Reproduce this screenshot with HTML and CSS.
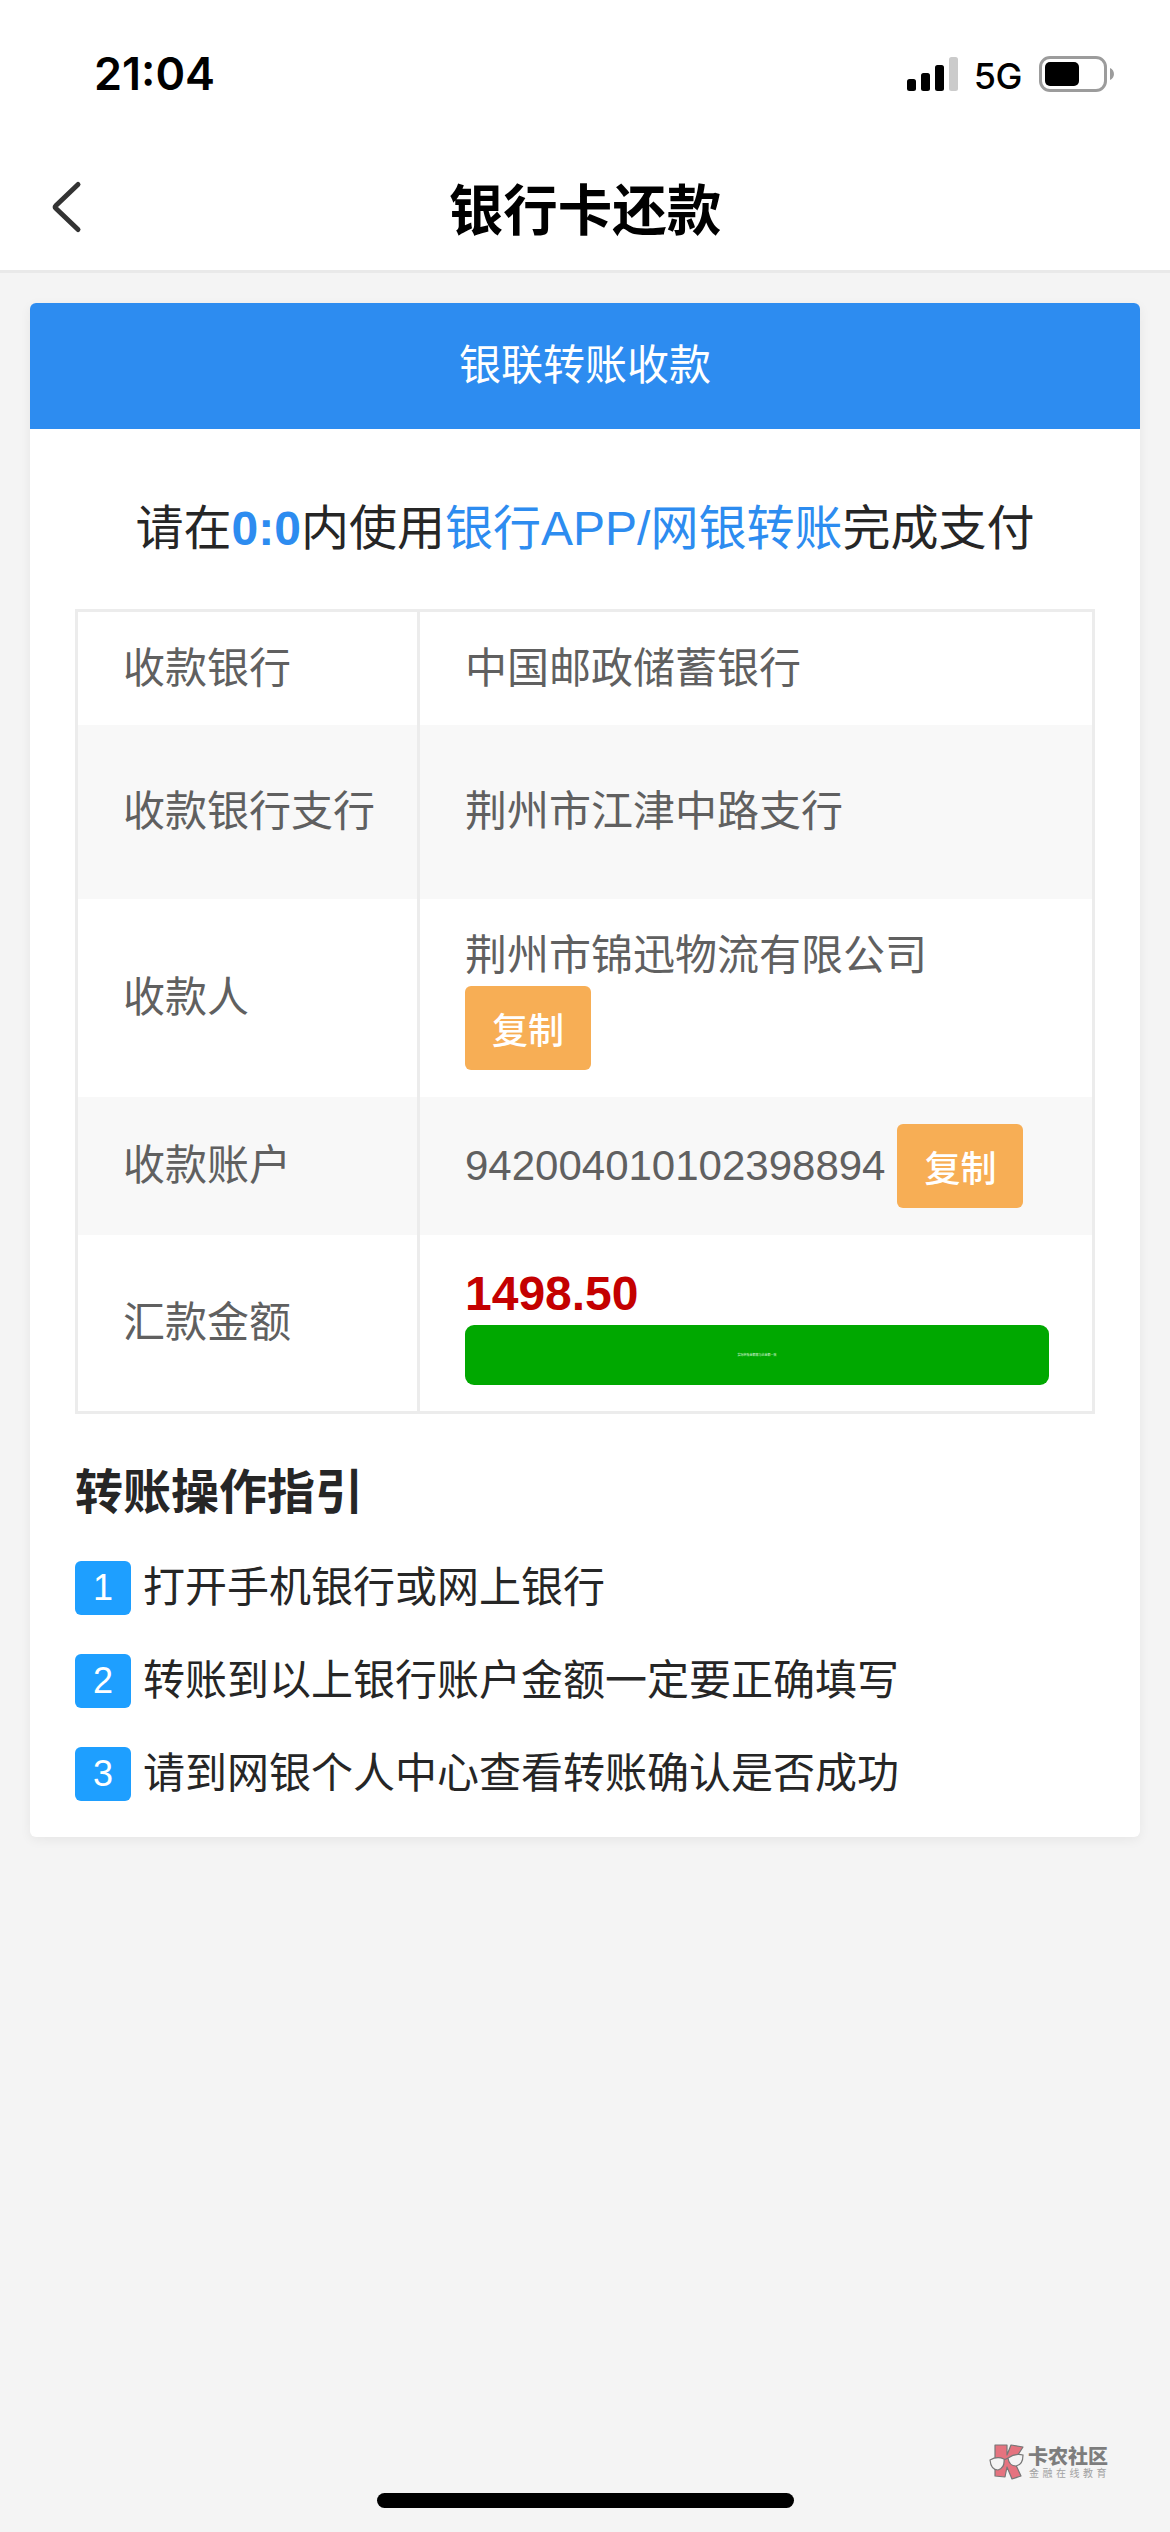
FILE: index.html
```html
<!DOCTYPE html>
<html lang="zh-CN">
<head>
<meta charset="utf-8">
<title>银行卡还款</title>
<link rel="stylesheet" href="styles.css">
</head>
<body>
<header class="top">
  <div class="status">
    <span class="time">21:04</span>
    <div class="status-icons">
      <svg class="signal" width="52" height="34" viewBox="0 0 52 34">
        <rect x="0" y="22" width="9" height="12" rx="2.5"/>
        <rect x="14" y="16" width="9" height="18" rx="2.5"/>
        <rect x="28" y="8" width="9" height="26" rx="2.5"/>
        <rect x="42" y="0" width="9" height="34" rx="2.5" fill="#cbcbcb"/>
      </svg>
      <span class="network">5G</span>
      <svg class="battery" width="76" height="36" viewBox="0 0 76 36">
        <rect x="1.5" y="1.5" width="65" height="33" rx="9.5" fill="none" stroke="#9c9c9c" stroke-width="3"/>
        <rect x="6" y="6" width="34" height="24" rx="5"/>
        <path d="M71 12c5.300 2.400 5.300 9.600 0 12z" fill="#9c9c9c"/>
      </svg>
    </div>
  </div>
  <nav class="nav">
    <svg class="back" width="32" height="54" viewBox="0 0 32 54">
      <path d="M28 4.500 L6 25.500 Q4.500 27 6 28.500 L28 49.500" fill="none" stroke="#333" stroke-width="5" stroke-linecap="round" stroke-linejoin="round"/>
    </svg>
    <h1 class="nav-title">银行卡还款</h1>
  </nav>
</header>

<main class="card">
  <h2 class="card-head">银联转账收款</h2>
  <p class="notice">请在<b class="blue">0:0</b>内使用<span class="blue">银行APP/网银转账</span>完成支付</p>
  <table class="info">
    <colgroup><col class="col-label"><col></colgroup>
    <tr class="r-bank"><th>收款银行</th><td>中国邮政储蓄银行</td></tr>
    <tr class="r-branch"><th>收款银行支行</th><td>荆州市江津中路支行</td></tr>
    <tr class="r-payee"><th>收款人</th><td><div class="stack"><span>荆州市锦迅物流有限公司</span><button class="copy">复制</button></div></td></tr>
    <tr class="r-account"><th>收款账户</th><td><div class="inline"><span>942004010102398894</span><button class="copy">复制</button></div></td></tr>
    <tr class="r-amount"><th>汇款金额</th><td><div class="amount">1498.50</div><div class="hint"><span class="hint-text">实际转账金额需与此金额一致</span></div></td></tr>
  </table>
  <section class="guide">
    <h3 class="guide-title">转账操作指引</h3>
    <ol class="steps">
      <li><span class="num">1</span><span>打开手机银行或网上银行</span></li>
      <li><span class="num">2</span><span>转账到以上银行账户金额一定要正确填写</span></li>
      <li><span class="num">3</span><span>请到网银个人中心查看转账确认是否成功</span></li>
    </ol>
  </section>
</main>

<div class="watermark">
  <svg width="36" height="38" viewBox="0 0 36 38">
    <path d="M6 2L18 2L18 12L22 2L34 4L25 18L32 33L23 36L18 24L16 34L6 33Z" fill="#e5737f" stroke="#777" stroke-width="1.200" stroke-linejoin="round"/>
    <path d="M1 17Q8 13 15 16Q16 25 9 27Q2 27 1 17ZM19 15Q26 10 34 12Q34 22 27 23Q20 23 19 15ZM15 17L19 15" fill="#f4f4f4" stroke="#777" stroke-width="1.200"/>
  </svg>
  <div class="wm-text">
    <span class="wm-name">卡农社区</span>
    <span class="wm-sub">金融在线教育</span>
  </div>
</div>
<div class="home-bar"></div>
</body>
</html>
```
FILE: styles.css
```css
* { box-sizing: border-box; margin: 0; padding: 0; }

body {
  position: relative;
  width: 1170px;
  height: 2532px;
  overflow: hidden;
  background: #f4f4f4;
  color: #262626;
  font-family: "Liberation Sans", "Noto Sans CJK SC", sans-serif;
}

.top {
  height: 273px;
  background: #fff;
  border-bottom: 3px solid #e9e9e9;
}

.status {
  display: flex;
  justify-content: space-between;
  align-items: center;
  height: 148px;
  padding: 0 55px 0 94px;
  color: #000;
  font-family: Inter, sans-serif;
}
.time { font-size: 45px; font-weight: 600; line-height: 60px; }
.status-icons { display: flex; align-items: center; }
.network { margin: 3px 17px 0 15px; font-size: 36px; font-weight: 500; line-height: 44px; letter-spacing: -0.5px; }
.battery { margin-left: 0; }

.nav {
  display: grid;
  grid-template-columns: 32px 1fr 32px;
  align-items: center;
  height: 118px;
  padding: 0 50px;
}
.nav-title {
  color: #000;
  font-family: "Noto Sans CJK SC", sans-serif;
  font-size: 54.500px;
  font-weight: 600;
  line-height: 72px;
  text-align: center;
}

.card {
  width: 1110px;
  height: 1534px;
  margin: 30px auto 0;
  border-radius: 6px;
  background: #fff;
  box-shadow: 0 3px 12px rgba(0, 0, 0, .06);
}
.card-head {
  height: 126px;
  border-radius: 6px 6px 0 0;
  background: #2d8cf0;
  color: #fff;
  font-size: 42px;
  font-weight: 400;
  line-height: 126px;
  text-align: center;
}
.notice {
  height: 180px;
  padding-top: 64px;
  font-size: 48px;
  line-height: 72px;
  text-align: center;
  white-space: nowrap;
}
.blue { color: #2d8cf0; }

.info {
  width: 1020px;
  margin: 0 45px;
  border: 3px solid #ececec;
  border-spacing: 0;
  table-layout: fixed;
  color: #606060;
  font-size: 42px;
  line-height: 60px;
}
.col-label { width: 342px; }
.info th, .info td {
  padding: 0 42px 0 45px;
  font-weight: 400;
  text-align: left;
  vertical-align: middle;
}
.info th { border-right: 3px solid #ececec; }
.info tr:nth-child(even) { background: #f8f8f8; }
.r-bank { height: 113px; }
.r-branch { height: 174px; }
.r-payee { height: 198px; }
.r-account { height: 138px; }
.r-amount { height: 176px; }

.stack { display: flex; flex-direction: column; align-items: flex-start; }
.inline { display: flex; align-items: center; gap: 12px; }
.copy {
  width: 126px;
  height: 84px;
  border: 0;
  border-radius: 6px;
  background: #f7ae55;
  color: #fff;
  font-family: "Noto Sans CJK SC", sans-serif;
  font-size: 36px;
  font-weight: 500;
}
.amount { height: 63px; color: #c40000; font-size: 48px; font-weight: 700; line-height: 63px; }
.hint {
  display: flex;
  align-items: center;
  justify-content: center;
  width: 584px;
  height: 60px;
  border-radius: 9px;
  background: #00a800;
}
.hint-text { color: #d8f3d8; font-size: 3px; line-height: 4px; }

.guide { padding: 43px 45px 0; }
.guide-title { font-size: 48px; font-weight: 700; line-height: 72px; }
.steps { display: grid; gap: 39px; margin-top: 32px; list-style: none; }
.steps li { display: flex; align-items: center; gap: 12px; height: 54px; font-size: 42px; line-height: 54px; }
.num {
  width: 56px;
  height: 54px;
  border-radius: 6px;
  background: #1e9fff;
  color: #fff;
  font-size: 36px;
  text-align: center;
}

.watermark {
  position: absolute;
  top: 2443px;
  left: 989px;
  display: flex;
  gap: 3px;
}
.wm-text { display: flex; flex-direction: column; padding-top: 2px; font-family: "Noto Sans CJK SC", sans-serif; }
.wm-name { color: #7d7d7d; font-size: 20px; font-weight: 900; line-height: 21px; }
.wm-sub { padding-left: 1px; color: #a2a2a2; font-size: 10px; line-height: 14px; letter-spacing: 3.500px; white-space: nowrap; }

.home-bar {
  position: absolute;
  bottom: 24px;
  left: 377px;
  width: 417px;
  height: 15px;
  border-radius: 8px;
  background: #000;
}
```
